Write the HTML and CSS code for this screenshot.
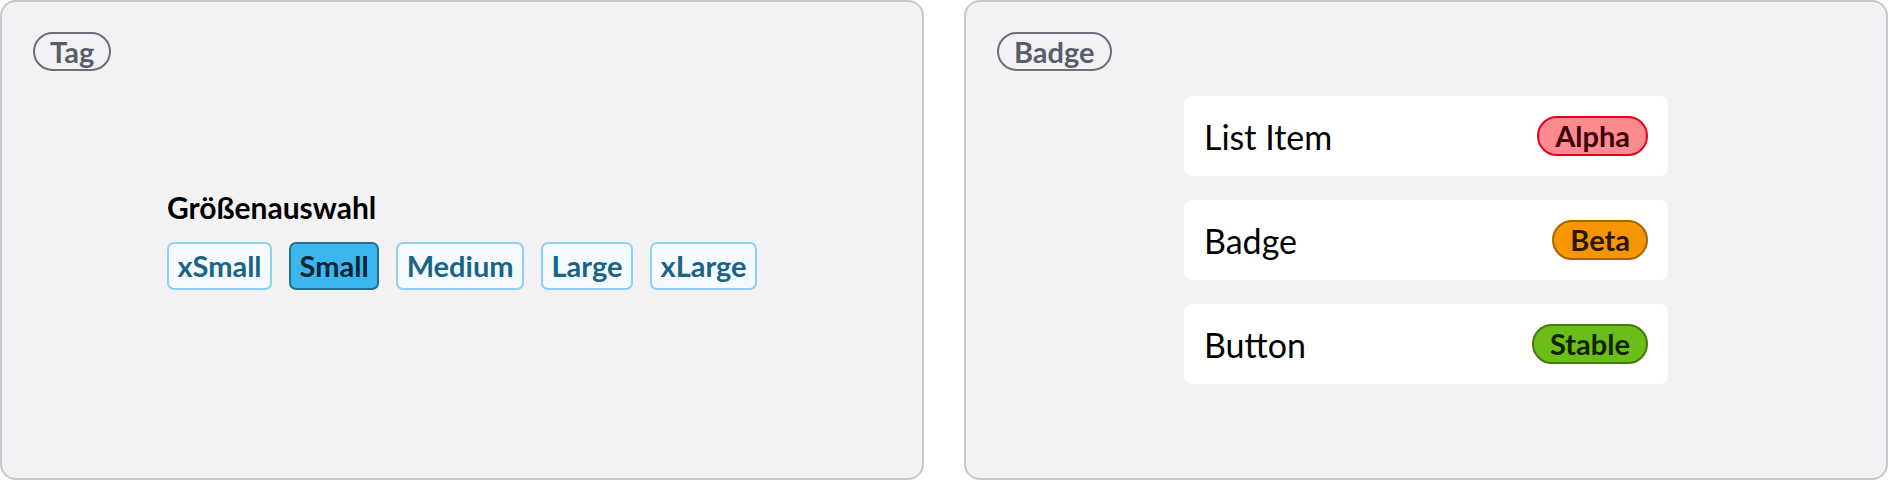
FILE: index.html
```html
<!DOCTYPE html>
<html lang="de">
<head>
<meta charset="utf-8">
<title>Tag &amp; Badge</title>
<link rel="stylesheet" href="styles.css">
</head>
<body>
<main class="board">
  <section class="panel">
    <span class="panel-label">Tag</span>
    <div class="tag-group">
      <h2 class="tag-heading">Größenauswahl</h2>
      <div class="tag-row">
        <span class="tag">xSmall</span>
        <span class="tag tag-selected">Small</span>
        <span class="tag">Medium</span>
        <span class="tag">Large</span>
        <span class="tag">xLarge</span>
      </div>
    </div>
  </section>
  <section class="panel">
    <span class="panel-label">Badge</span>
    <ul class="list">
      <li class="list-item"><span class="list-text">List Item</span><span class="badge badge-alpha">Alpha</span></li>
      <li class="list-item"><span class="list-text">Badge</span><span class="badge badge-beta">Beta</span></li>
      <li class="list-item"><span class="list-text">Button</span><span class="badge badge-stable">Stable</span></li>
    </ul>
  </section>
</main>
</body>
</html>
```
FILE: styles.css
```css
* { box-sizing: border-box; }
html, body { margin: 0; padding: 0; background: #ffffff; }
body { font-family: Lato, "Noto Sans", sans-serif; color: #000; }

.board {
  display: flex;
  gap: 40px;
  width: 1888px;
  height: 480px;
}

.panel {
  position: relative;
  flex: 1;
  height: 480px;
  background: #f2f2f4;
  border: 2px solid #c5c7cc;
  border-radius: 16px;
  display: flex;
  align-items: center;
  justify-content: center;
}

.panel-label {
  position: absolute;
  top: 30px;
  left: 31px;
  height: 39px;
  padding: 0 15px;
  border: 2px solid #6b6f7a;
  border-radius: 20px;
  font-weight: 700;
  font-size: 29px;
  line-height: 35px;
  color: #595d69;
}

.tag-group {
  display: flex;
  flex-direction: column;
  gap: 18px;
}

.tag-heading {
  margin: 0;
  font-size: 30px;
  font-weight: 700;
  line-height: 34px;
  color: #000;
}

.tag-row {
  display: flex;
  gap: 17px;
}

.tag {
  height: 48px;
  padding: 0 8.5px;
  border: 2px solid #8dd0f5;
  border-radius: 7px;
  background: #f5fafe;
  color: #1a6487;
  font-size: 29px;
  font-weight: 700;
  line-height: 44px;
}

.tag-selected {
  background: #3bb7ee;
  border-color: #1f6e95;
  color: #092433;
}

.list {
  list-style: none;
  margin: 0;
  padding: 0;
  width: 484px;
  display: flex;
  flex-direction: column;
  gap: 24px;
}

.list-item {
  height: 80px;
  padding: 0 20px;
  background: #ffffff;
  border-radius: 8px;
  display: flex;
  align-items: center;
  justify-content: space-between;
}

.list-text {
  font-size: 34px;
  font-weight: 400;
  color: #000;
}

.badge {
  height: 40px;
  padding: 0 16px;
  border: 2px solid;
  border-radius: 20px;
  font-size: 29px;
  font-weight: 700;
  line-height: 36px;
}

.badge-alpha { background: #ff8a8f; border-color: #e8001c; color: #3a0008; }
.badge-beta { background: #f59500; border-color: #a86400; color: #2b1700; }
.badge-stable { background: #6dbd19; border-color: #3f7a0a; color: #0e2300; }
```
